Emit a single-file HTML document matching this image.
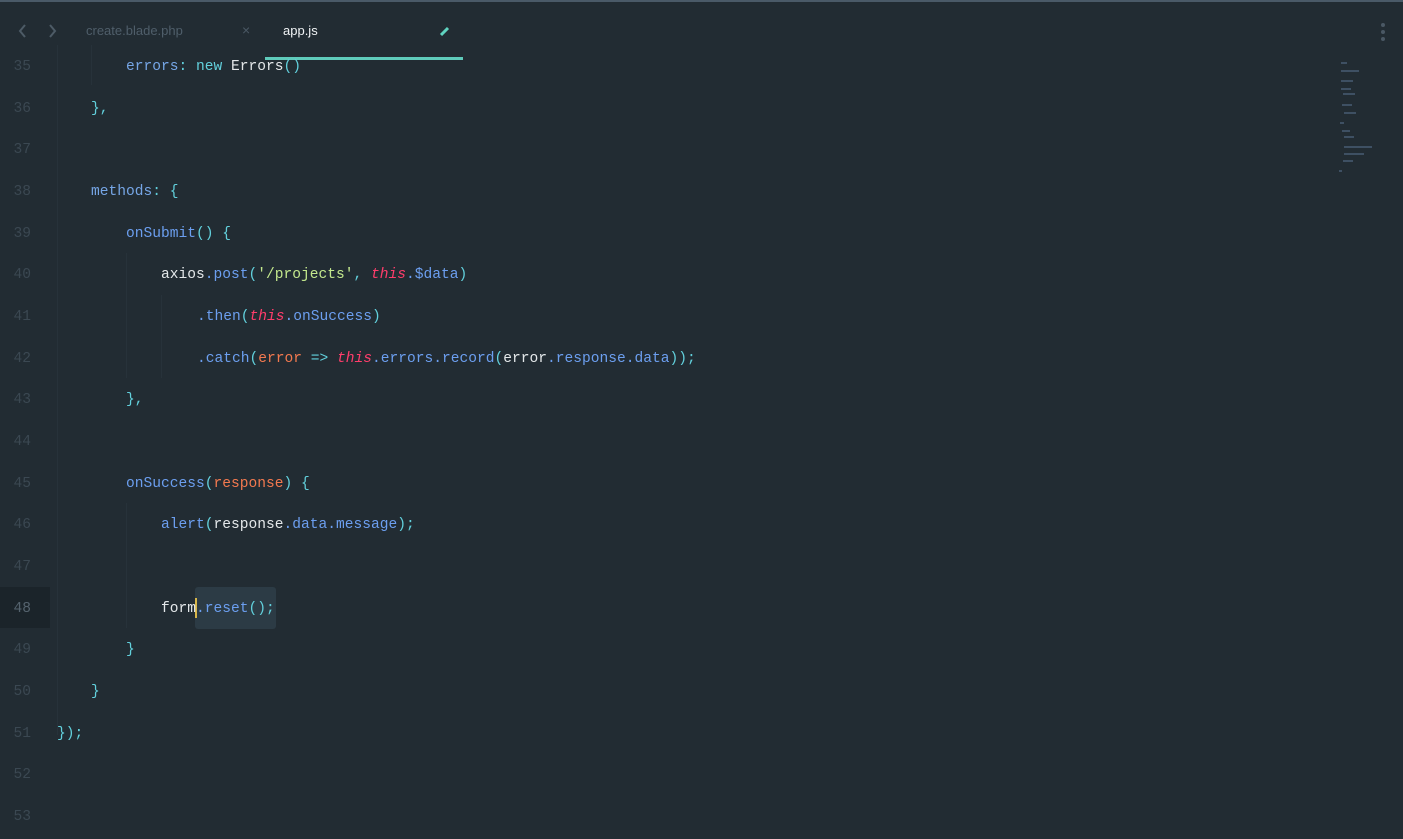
<!DOCTYPE html>
<html><head><meta charset="utf-8"><style>
html,body{margin:0;padding:0;}
body{width:1403px;height:828px;background:#222c33;overflow:hidden;position:relative;font-family:"Liberation Sans",sans-serif;}
.top{position:absolute;left:0;top:0;width:1403px;height:2px;background:#4a5a68;}
.tab{position:absolute;top:23px;font-size:13px;}
.code{position:absolute;left:0;top:47px;width:1403px;font-family:"Liberation Mono",monospace;font-size:14.58px;}
.ln{position:absolute;height:41.67px;line-height:41.67px;width:1403px;}
.num{position:absolute;left:0;width:31px;text-align:right;color:#3b4852;}
.t{position:absolute;white-space:pre;color:#e4e8ea;}
.k{color:#76a6e6}.c{color:#62d0dc}.w{color:#e4e8ea}.s{color:#c3e88d}.th{color:#ff3d6b;font-style:italic}.o{color:#f3794f}.m{color:#6c9ff0}
.guide{position:absolute;width:1px;background:#27323a;}
</style></head><body>
<div class="top"></div>
<svg style="position:absolute;left:17px;top:24px" width="40" height="14"><path d="M8 1 L3 7 L8 13" stroke="#4d5b66" stroke-width="2" fill="none"/><path d="M33 1 L38 7 L33 13" stroke="#4d5b66" stroke-width="2" fill="none"/></svg>
<div class="tab" style="left:86px;color:#4f5e6a">create.blade.php</div>
<div class="tab" style="left:242px;color:#4a5864;font-size:14px;top:22px">×</div>
<div class="tab" style="left:283px;color:#f0f3f5">app.js</div>
<svg style="position:absolute;left:439px;top:25px" width="12" height="12"><path d="M2 10 L9 3" stroke="#5fd3c0" stroke-width="3"/></svg>
<div style="position:absolute;left:265px;top:57px;width:198px;height:3px;background:#5fcbbb"></div>
<svg style="position:absolute;left:1379px;top:22px" width="8" height="20"><circle cx="4" cy="3" r="2" fill="#4a5864"/><circle cx="4" cy="10" r="2" fill="#4a5864"/><circle cx="4" cy="17" r="2" fill="#4a5864"/></svg>
<svg style="position:absolute;left:1336px;top:60px" width="40" height="115">
<g fill="#4a6078" opacity=".7">
<rect x="5" y="2" width="6" height="2"/><rect x="5" y="10" width="18" height="2"/><rect x="5" y="20" width="12" height="2"/><rect x="5" y="28" width="10" height="2"/><rect x="7" y="33" width="12" height="2"/><rect x="6" y="44" width="10" height="2"/><rect x="8" y="52" width="12" height="2"/><rect x="4" y="62" width="4" height="2"/><rect x="6" y="70" width="8" height="2"/><rect x="8" y="76" width="10" height="2"/><rect x="8" y="86" width="28" height="2"/><rect x="8" y="93" width="20" height="2"/><rect x="7" y="100" width="10" height="2"/><rect x="3" y="110" width="3" height="2"/>
</g></svg>
<div style="position:absolute;left:0;top:587px;width:50px;height:41px;background:#1b242a"></div>
<div style="position:absolute;left:195px;top:587px;width:81px;height:42px;background:#2c3b45;border-radius:3px"></div>
<div style="position:absolute;left:195px;top:598px;width:2px;height:20px;background:#d8b64a"></div>
<div class="guide" style="left:57px;top:45px;height:690px"></div>
<div class="guide" style="left:91px;top:45px;height:40px"></div>
<div class="guide" style="left:126px;top:253px;height:125px"></div>
<div class="guide" style="left:126px;top:503px;height:125px"></div>
<div class="guide" style="left:161px;top:295px;height:83px"></div>
<div class="code">
<div class="ln" style="top:0"><span class="num">35</span><span class="t" style="left:126px"><span class="k">errors</span><span class="c">: new </span>Errors<span class="c">()</span></span></div>
<div class="ln" style="top:41.67px"><span class="num">36</span><span class="t c" style="left:91px">},</span></div>
<div class="ln" style="top:83.33px"><span class="num">37</span></div>
<div class="ln" style="top:125px"><span class="num">38</span><span class="t" style="left:91px"><span class="k">methods</span><span class="c">: {</span></span></div>
<div class="ln" style="top:166.67px"><span class="num">39</span><span class="t" style="left:126px"><span class="m">onSubmit</span><span class="c">() {</span></span></div>
<div class="ln" style="top:208.33px"><span class="num">40</span><span class="t" style="left:161px">axios<span class="m">.post</span><span class="c">(</span><span class="s">'/projects'</span><span class="c">, </span><span class="th">this</span><span class="m">.$data</span><span class="c">)</span></span></div>
<div class="ln" style="top:250px"><span class="num">41</span><span class="t" style="left:197px"><span class="m">.then</span><span class="c">(</span><span class="th">this</span><span class="m">.onSuccess</span><span class="c">)</span></span></div>
<div class="ln" style="top:291.67px"><span class="num">42</span><span class="t" style="left:197px"><span class="m">.catch</span><span class="c">(</span><span class="o">error</span> <span class="c">=&gt;</span> <span class="th">this</span><span class="m">.errors.record</span><span class="c">(</span>error<span class="m">.response.data</span><span class="c">));</span></span></div>
<div class="ln" style="top:333.33px"><span class="num">43</span><span class="t c" style="left:126px">},</span></div>
<div class="ln" style="top:375px"><span class="num">44</span></div>
<div class="ln" style="top:416.67px"><span class="num">45</span><span class="t" style="left:126px"><span class="m">onSuccess</span><span class="c">(</span><span class="o">response</span><span class="c">) {</span></span></div>
<div class="ln" style="top:458.33px"><span class="num">46</span><span class="t" style="left:161px"><span class="m">alert</span><span class="c">(</span>response<span class="m">.data.message</span><span class="c">);</span></span></div>
<div class="ln" style="top:500px"><span class="num">47</span></div>
<div class="ln" style="top:541.67px"><span class="num" style="color:#55636e">48</span><span class="t" style="left:161px">form<span class="m">.reset</span><span class="c">();</span></span></div>
<div class="ln" style="top:583.33px"><span class="num">49</span><span class="t c" style="left:126px">}</span></div>
<div class="ln" style="top:625px"><span class="num">50</span><span class="t c" style="left:91px">}</span></div>
<div class="ln" style="top:666.67px"><span class="num">51</span><span class="t c" style="left:57px">});</span></div>
<div class="ln" style="top:708.33px"><span class="num">52</span></div>
<div class="ln" style="top:750px"><span class="num">53</span></div>
</div>
</body></html>
